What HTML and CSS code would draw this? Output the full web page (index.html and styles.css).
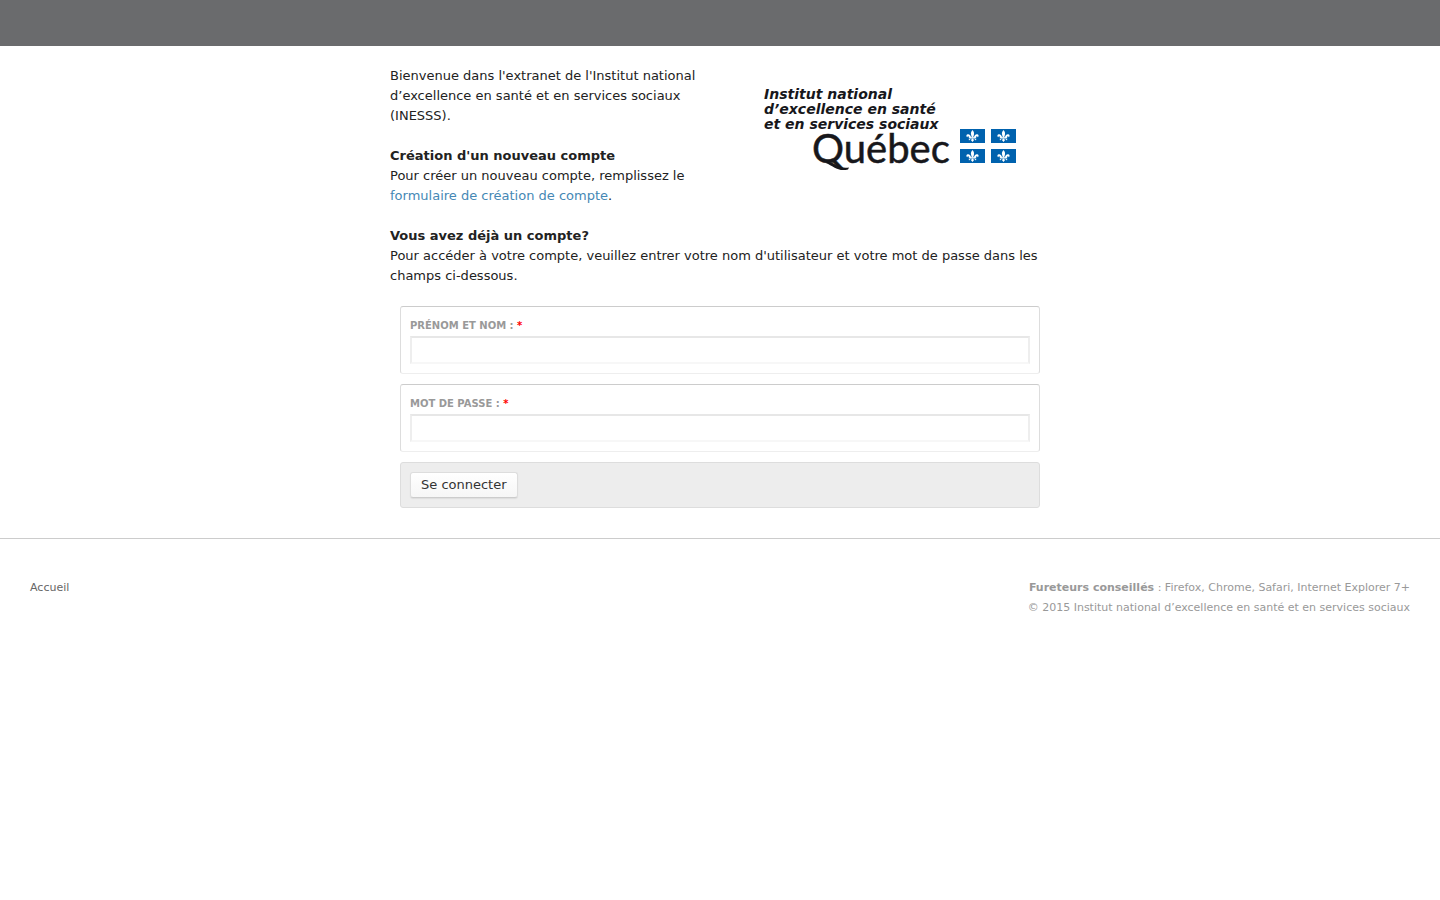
FILE: index.html
```html
<!DOCTYPE html>
<html lang="fr">
<head>
<meta charset="utf-8">
<meta name="viewport" content="width=device-width, initial-scale=1">
<title>Extranet INESSS</title>
<link rel="stylesheet" href="styles.css">
</head>
<body>
<header class="topbar"></header>
<main class="content">
  <div class="intro">
    <div class="intro-text">
      <p>Bienvenue dans l'extranet de l'Institut national d’excellence en santé et en services sociaux (INESSS).</p>
      <p><strong>Création d'un nouveau compte</strong><br>Pour créer un nouveau compte, remplissez le <a href="#">formulaire de création de compte</a>.</p>
    </div>
    <svg class="logo" viewBox="0 0 260 90" role="img" aria-label="Institut national d’excellence en santé et en services sociaux, Québec">
      <defs>
        <g id="drapeau">
          <rect width="25" height="14" fill="#0062ae"/>
          <g fill="#fff">
            <path d="M12.5 1C11 2.700 10.600 4.100 11.100 5.700L11.800 8.200H13.200L13.900 5.700C14.400 4.100 14 2.700 12.500 1Z"/>
            <path d="M11.300 8.800C10.800 6.600 9.300 4.800 7.600 5.300C6.100 5.700 6 7.600 7.200 8.200C7.500 7.200 8.500 7.100 9 7.900L9.300 8.800Z"/>
            <path d="M13.700 8.800C14.200 6.600 15.700 4.800 17.400 5.300C18.900 5.700 19 7.600 17.800 8.200C17.500 7.200 16.500 7.100 16 7.900L15.700 8.800Z"/>
            <path d="M8.800 8.200H16.200V9.400H8.800Z"/>
            <path d="M11.600 9.400H13.400L13.700 11.600L12.500 13L11.300 11.600Z"/>
            <path d="M11.300 9.400L9 11.600L8.700 10.300ZM13.700 9.400L16 11.600L16.300 10.300Z"/>
          </g>
        </g>
      </defs>
      <g class="logo-name">
        <text x="4" y="15">Institut national</text>
        <text x="4" y="30">d’excellence en santé</text>
        <text x="4" y="45">et en services sociaux</text>
      </g>
      <text class="logo-quebec" x="52" y="79">Québec</text>
      <path d="M69 78C76 79 78 85 89 83.500L88 85.500C78 88 73 82 66 79Z" fill="#17171b"/>
      <use href="#drapeau" x="200" y="45"/>
      <use href="#drapeau" x="231" y="45"/>
      <use href="#drapeau" x="200" y="65"/>
      <use href="#drapeau" x="231" y="65"/>
    </svg>
  </div>
  <p><strong>Vous avez déjà un compte?</strong><br>Pour accéder à votre compte, veuillez entrer votre nom d'utilisateur et votre mot de passe dans les champs ci-dessous.</p>
  <form class="login">
    <div class="field">
      <label for="name">Prénom et nom : <span class="required">*</span></label>
      <input type="text" id="name" name="name">
    </div>
    <div class="field">
      <label for="pass">Mot de passe : <span class="required">*</span></label>
      <input type="password" id="pass" name="pass">
    </div>
    <div class="actions">
      <button type="submit">Se connecter</button>
    </div>
  </form>
</main>
<footer class="footer">
  <nav><a href="#">Accueil</a></nav>
  <div class="footer-info">
    <strong>Fureteurs conseillés</strong> : Firefox, Chrome, Safari, Internet Explorer 7+<br>
    © 2015 Institut national d’excellence en santé et en services sociaux
  </div>
</footer>
</body>
</html>
```
FILE: styles.css
```css
* { box-sizing: border-box; }
body {
  margin: 0;
  background: #fff;
  color: #222;
  font: 13px/20px "DejaVu Sans", Verdana, sans-serif;
}
.topbar { height: 46px; background: #6a6b6d; }
.content {
  max-width: 660px;
  margin: 0 auto;
  padding: 20px 0 30px;
}
.content p { margin: 0 0 20px; }
.content a { color: #4588b5; text-decoration: none; }
.intro {
  display: flex;
  flex-wrap: wrap;
  justify-content: space-between;
  align-items: flex-start;
}
.intro-text { width: 320px; }
.logo {
  width: 260px;
  height: 90px;
  margin: 18px 30px 0 0;
}
.logo-name {
  font: italic 700 14px "DejaVu Sans", sans-serif;
  fill: #17171b;
}
.logo-quebec {
  font: 400 40px Lato, sans-serif;
  fill: #17171b;
  stroke: #17171b;
  stroke-width: 0.5;
}
.login {
  display: flex;
  flex-direction: column;
  gap: 10px;
  margin: 0 10px;
}
.field {
  padding: 9px;
  border: 1px solid;
  border-color: #ccc #ddd #eee;
  border-radius: 3px;
}
.field label {
  display: block;
  color: #999;
  font-size: 10px;
  font-weight: 700;
  text-transform: uppercase;
}
.required { color: #f00; }
.field input {
  display: block;
  width: 100%;
  height: 28px;
  padding: 3px;
  border: 2px solid;
  border-color: #e7e7e7 #eee #f7f7f7;
  background: #fff;
  font: inherit;
}
.actions {
  padding: 9px;
  border: 1px solid #ddd;
  border-radius: 3px;
  background: #ededed;
}
.actions button {
  display: block;
  height: 26px;
  padding: 0 10px;
  border: 1px solid;
  border-color: #ddd #ddd #ccc;
  border-radius: 3px;
  background: linear-gradient(#fff, #f6f6f6);
  box-shadow: 0 1px 1px #ddd;
  color: #333;
  font: inherit;
}
.footer {
  display: flex;
  flex-wrap: wrap;
  justify-content: space-between;
  gap: 20px;
  padding: 39px 30px;
  border-top: 1px solid #ccc;
  color: #999;
  font-size: 11px;
}
.footer a { color: #666; text-decoration: none; }
.footer-info { text-align: right; }
```
